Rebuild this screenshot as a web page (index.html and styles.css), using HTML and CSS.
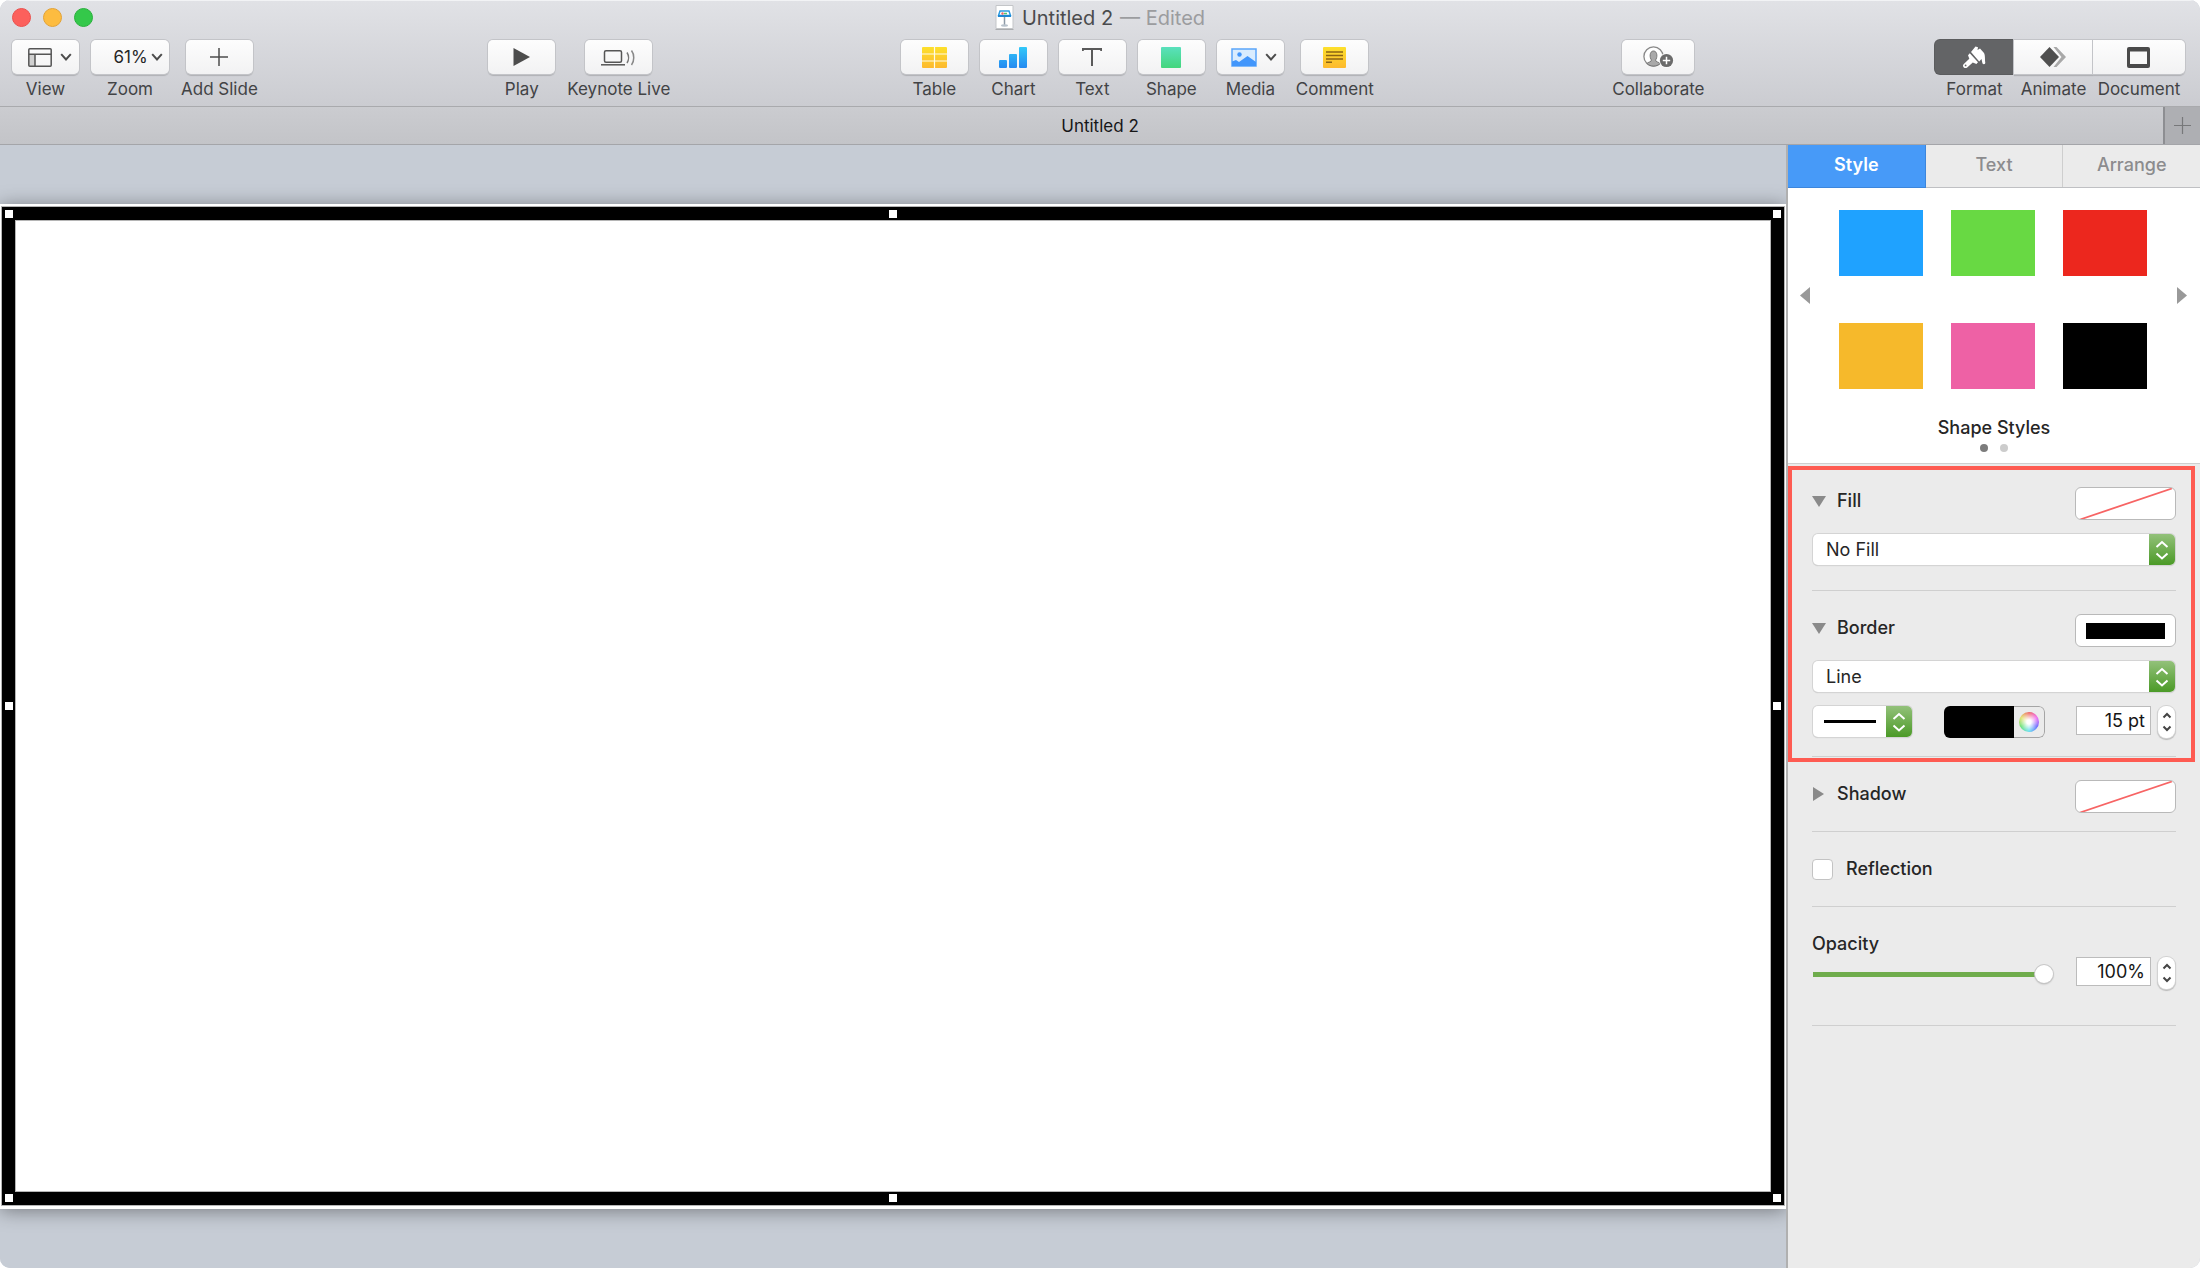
FILE: index.html
```html
<!DOCTYPE html>
<html lang="en">
<head>
<meta charset="utf-8">
<title>Untitled 2</title>
<link rel="stylesheet" href="styles.css">
</head>
<body>
<div class="window">
  <header class="chrome">
    <div class="titlebar">
      <div class="lights">
        <button class="light light-close" aria-label="Close"></button>
        <button class="light light-min" aria-label="Minimize"></button>
        <button class="light light-full" aria-label="Full screen"></button>
      </div>
      <h1 class="title">
        <svg class="doc-icon" width="19" height="25" viewBox="0 0 19 25"><path d="M1 .5h17v23H1z" fill="#fff" stroke="#c3c5c8"/><path d="M.5 24.5h18" stroke="#a9abae"/><path d="M5 6h9l1.500 4.500H3.500z" fill="#fff" stroke="#2e9be0" stroke-width="1.500"/><path d="M3 11h13" stroke="#1d87d4" stroke-width="2"/><circle cx="7.500" cy="8.500" r="1.200" fill="#e66"/><path d="M9 8.500h3" stroke="#5bc36a" stroke-width="1.500"/><path d="M9.500 12v8" stroke="#8c99a6" stroke-width="1.500"/><ellipse cx="9.500" cy="20.500" rx="3.500" ry="1.200" fill="#b8c2cc"/></svg>
        <span class="title-name">Untitled 2</span>
        <span class="title-state">— Edited</span>
      </h1>
    </div>
    <div class="toolbar">
      <div class="tool-group">
        <div class="tool">
          <button class="tool-btn tool-btn-menu" aria-labelledby="l-view">
            <svg width="24" height="19" viewBox="0 0 24 19" fill="none" stroke="#555" stroke-width="1.500"><path d="M1 6.500h6V18H1z" fill="#d0d0d0" stroke="none"/><rect x=".8" y=".8" width="22.400" height="17.400" rx="1"/><path d="M.8 6.200h22.400M7 6.200v12"/></svg>
            <svg class="chev" width="12" height="8" viewBox="0 0 12 8"><path d="M1.200 1.200 6 6.500l4.800-5.300"/></svg>
          </button>
          <span class="tool-label" id="l-view">View</span>
        </div>
        <div class="tool">
          <button class="tool-btn tool-btn-zoom" aria-describedby="l-zoom">61%<svg class="chev" width="12" height="8" viewBox="0 0 12 8"><path d="M1.200 1.200 6 6.500l4.800-5.300"/></svg></button>
          <span class="tool-label" id="l-zoom">Zoom</span>
        </div>
        <div class="tool">
          <button class="tool-btn" aria-labelledby="l-add"><svg width="18" height="18" viewBox="0 0 18 18" stroke="#4c4c4c" stroke-width="1.500"><path d="M9 0v18M0 9h18"/></svg></button>
          <span class="tool-label" id="l-add">Add Slide</span>
        </div>
      </div>
      <div class="tool-group">
        <div class="tool">
          <button class="tool-btn" aria-labelledby="l-play"><svg width="17" height="18" viewBox="0 0 17 18"><path d="M.5 0 17 9 .5 18z" fill="#4c4c4c"/></svg></button>
          <span class="tool-label" id="l-play">Play</span>
        </div>
        <div class="tool">
          <button class="tool-btn" aria-labelledby="l-live"><svg width="35" height="17" viewBox="0 0 35 17" fill="none" stroke="#555" stroke-width="1.500"><rect x="3.500" y="1.800" width="17" height="11.500" rx="1.500"/><path d="M0 15.800h24"/><path d="M26 3.500c2 3 2 7.500 0 10.500" stroke="#777"/><path d="M30.500 1.500c3 4 3 10.500 0 14.500" stroke="#888"/></svg></button>
          <span class="tool-label" id="l-live">Keynote Live</span>
        </div>
      </div>
      <div class="tool-group tool-group-insert">
        <div class="tool">
          <button class="tool-btn" aria-labelledby="l-table"><svg width="25" height="21" viewBox="0 0 25 21"><defs><linearGradient id="gy" x2="0" y2="1"><stop stop-color="#fde02c"/><stop offset="1" stop-color="#fdb92e"/></linearGradient></defs><rect width="25" height="21" rx="1" fill="url(#gy)"/><path d="M0 7h25M0 14h25M12.500 0v21" stroke="#fffbe8" stroke-width="1.200"/></svg></button>
          <span class="tool-label" id="l-table">Table</span>
        </div>
        <div class="tool">
          <button class="tool-btn" aria-labelledby="l-chart"><svg width="28" height="21" viewBox="0 0 28 21"><defs><linearGradient id="gb" gradientUnits="userSpaceOnUse" x1="0" y1="0" x2="0" y2="21"><stop stop-color="#33c9f9"/><stop offset="1" stop-color="#2489f0"/></linearGradient></defs><g fill="url(#gb)"><rect y="13" width="8" height="8" rx="1"/><rect x="10" y="7" width="8" height="14" rx="1"/><rect x="20" width="8" height="21" rx="1"/></g></svg></button>
          <span class="tool-label" id="l-chart">Chart</span>
        </div>
        <div class="tool">
          <button class="tool-btn" aria-labelledby="l-text"><svg width="20" height="20" viewBox="0 0 20 20" fill="none" stroke="#5a5a5a" stroke-width="2"><path d="M.8 4V2h18.400v2M10 2v17"/></svg></button>
          <span class="tool-label" id="l-text">Text</span>
        </div>
        <div class="tool">
          <button class="tool-btn" aria-labelledby="l-shape"><svg width="20" height="21" viewBox="0 0 20 21"><defs><linearGradient id="gg" x2="0" y2="1"><stop stop-color="#5ae0bd"/><stop offset="1" stop-color="#43d67c"/></linearGradient></defs><rect width="20" height="21" rx="1" fill="url(#gg)"/></svg></button>
          <span class="tool-label" id="l-shape">Shape</span>
        </div>
        <div class="tool">
          <button class="tool-btn tool-btn-menu" aria-labelledby="l-media"><svg width="26" height="19" viewBox="0 0 26 19"><rect x="1" y="1" width="24" height="17" fill="#d9ecfe" stroke="#5aa5fa" stroke-width="1.500"/><circle cx="8.500" cy="6.500" r="2.200" fill="#4296fb"/><path d="M1 13.500 5 12l3 2 8.500-6 8.500 6V18H1z" fill="#4296fb"/></svg>
            <svg class="chev" width="12" height="8" viewBox="0 0 12 8"><path d="M1.200 1.200 6 6.500l4.800-5.300"/></svg>
          </button>
          <span class="tool-label" id="l-media">Media</span>
        </div>
        <div class="tool">
          <button class="tool-btn" aria-labelledby="l-comment"><svg width="23" height="21" viewBox="0 0 23 21"><rect width="23" height="21" rx="1" fill="url(#gy)"/><path d="M3 5h17M3 8.500h17M3 12h17M3 15.200h6" stroke="#8a6414" stroke-width="1.400"/></svg></button>
          <span class="tool-label" id="l-comment">Comment</span>
        </div>
      </div>
      <div class="tool-group">
        <div class="tool">
          <button class="tool-btn tool-btn-wide" aria-labelledby="l-collab"><svg width="31" height="22" viewBox="0 0 31 22"><circle cx="10.500" cy="10.500" r="9.600" fill="#fff" stroke="#888" stroke-width="1.300"/><path d="M4 17.500c1-1.500 4.500-1.500 4.500-3.500C6.500 12 6.300 5 10.500 5s4 7 2 9c0 2 3.500 2 4.500 3.500-3 3.400-10 3.400-13 0z" fill="#a9a9a9" stroke="#777"/><circle cx="23.500" cy="14.500" r="7.500" fill="#fafafa"/><circle cx="23.500" cy="14.500" r="6.600" fill="#6b6b6b"/><path d="M23.500 10.800v7.400M19.800 14.500h7.400" stroke="#fff" stroke-width="1.500"/></svg></button>
          <span class="tool-label" id="l-collab">Collaborate</span>
        </div>
      </div>
      <div class="segments">
        <div class="tool">
          <button class="seg seg-on" aria-pressed="true" aria-labelledby="l-format"><svg width="23" height="22" viewBox="0 0 23 22" fill="#fff"><path d="M8 6 12.500.5 15 1.300 14.500 4 17 2.500 21 7c1.300 2 .8 7 1.300 9.500a1.500 1.500 0 0 1-3 .3L18.500 13l-2.300 2.500z"/><path d="M6.800 7.300 15 16.300l-1.600 1.700-3.600-1.600-5.600 5A2.300 2.300 0 0 1 .8 18L6.300 12.700 5 9.300z"/><circle cx="2.600" cy="19.400" r=".9" fill="#666"/></svg></button>
          <span class="tool-label" id="l-format">Format</span>
        </div>
        <div class="tool">
          <button class="seg" aria-labelledby="l-animate"><svg width="26" height="20" viewBox="0 0 26 20"><path d="M9.500 0 19 10 9.500 20 0 10z" fill="#4f4f4f"/><path d="M13.500 0h3L26 10l-9.500 10h-3L21.500 10z" fill="#a8a8a8"/></svg></button>
          <span class="tool-label" id="l-animate">Animate</span>
        </div>
        <div class="tool">
          <button class="seg seg-last" aria-labelledby="l-document"><svg width="23" height="21" viewBox="0 0 23 21"><rect width="23" height="21" rx="2" fill="#4a4a4a"/><rect x="3" y="4.500" width="17" height="12.500" fill="#f8f8f8"/></svg></button>
          <span class="tool-label" id="l-document">Document</span>
        </div>
      </div>
    </div>
  </header>
  <nav class="tabbar">
    <a class="doc-tab" href="#">Untitled 2</a>
    <button class="new-tab" aria-label="New tab"><svg width="17" height="17" viewBox="0 0 17 17" stroke="#77787a" stroke-width="1.200"><path d="M8.500 0v17M0 8.500h17"/></svg></button>
  </nav>
  <main class="workspace">
    <section class="canvas" aria-label="Slide canvas">
      <div class="slide">
        <div class="shape">
          <i class="handle nw"></i><i class="handle n"></i><i class="handle ne"></i>
          <i class="handle w"></i><i class="handle e"></i>
          <i class="handle sw"></i><i class="handle s"></i><i class="handle se"></i>
        </div>
      </div>
    </section>
    <aside class="inspector">
      <div class="tabs">
        <button class="tab tab-on">Style</button>
        <button class="tab">Text</button>
        <button class="tab">Arrange</button>
      </div>
      <div class="styles">
        <div class="styles-row">
          <button class="arrow" aria-label="Previous styles"><svg width="10" height="17" viewBox="0 0 10 17"><path d="M10 0v17L0 8.500z" fill="#999"/></svg></button>
          <div class="swatches">
            <button class="swatch blue" aria-label="Blue"></button>
            <button class="swatch green" aria-label="Green"></button>
            <button class="swatch red" aria-label="Red"></button>
            <button class="swatch yellow" aria-label="Yellow"></button>
            <button class="swatch pink" aria-label="Pink"></button>
            <button class="swatch black" aria-label="Black"></button>
          </div>
          <button class="arrow" aria-label="Next styles"><svg width="10" height="17" viewBox="0 0 10 17"><path d="M0 0v17l10-8.500z" fill="#999"/></svg></button>
        </div>
        <h2 class="styles-title">Shape Styles</h2>
        <div class="dots"><i class="dot dot-on"></i><i class="dot"></i></div>
      </div>
      <div class="panel">
        <div class="highlight"></div>
        <section class="section">
          <div class="head">
            <h3 class="head-title"><svg class="tri" width="14" height="14" viewBox="0 0 14 14"><path d="M0 2h14L7 13z"/></svg><label for="fill">Fill</label></h3>
            <button class="well" aria-label="Fill preview"><svg width="100" height="32" viewBox="0 0 100 32"><path d="M4 31.500 96 .5" stroke="#f76464" stroke-width="1.800"/></svg></button>
          </div>
          <div class="popup">
            <select class="select" id="fill"><option>No Fill</option></select>
            <span class="popup-cap"><svg width="14" height="20" viewBox="0 0 14 20"><path d="M1.500 7 7 2l5.500 5M1.500 13.500l5.500 5 5.500-5"/></svg></span>
          </div>
        </section>
        <section class="section section-border">
          <div class="head">
            <h3 class="head-title"><svg class="tri" width="14" height="14" viewBox="0 0 14 14"><path d="M0 2h14L7 13z"/></svg><label for="border">Border</label></h3>
            <button class="well" aria-label="Border preview"><span class="well-fill"></span></button>
          </div>
          <div class="popup">
            <select class="select" id="border"><option>Line</option></select>
            <span class="popup-cap"><svg width="14" height="20" viewBox="0 0 14 20"><path d="M1.500 7 7 2l5.500 5M1.500 13.500l5.500 5 5.500-5"/></svg></span>
          </div>
          <div class="controls">
            <button class="popup line-popup" aria-label="Line style"><span class="line-area"><span class="line-sample"></span></span><span class="popup-cap"><svg width="14" height="20" viewBox="0 0 14 20"><path d="M1.500 7 7 2l5.500 5M1.500 13.500l5.500 5 5.500-5"/></svg></span></button>
            <button class="color-well" aria-label="Line color"><span class="color-fill"></span><span class="wheel-box"><span class="wheel"></span></span></button>
            <div class="number">
              <input class="field" type="text" value="15 pt" aria-label="Line width">
              <button class="stepper" aria-label="Change line width"><svg width="10" height="20" viewBox="0 0 10 20"><path d="M1.500 5.500 5 2l3.500 3.500M1.500 14.500 5 18l3.500-3.500"/></svg></button>
            </div>
          </div>
        </section>
        <section class="section section-shadow">
          <div class="head">
            <h3 class="head-title"><svg class="tri" width="14" height="14" viewBox="0 0 14 14"><path d="M1 0v14l11-7z"/></svg>Shadow</h3>
            <button class="well" aria-label="Shadow preview"><svg width="100" height="32" viewBox="0 0 100 32"><path d="M4 31.500 96 .5" stroke="#f76464" stroke-width="1.800"/></svg></button>
          </div>
        </section>
        <section class="section section-reflection">
          <label class="check"><input class="checkbox" type="checkbox">Reflection</label>
        </section>
        <section class="section section-opacity">
          <label class="opacity-label" for="opacity">Opacity</label>
          <div class="opacity-row">
            <input class="slider" id="opacity" type="range" min="0" max="100" value="100">
            <div class="number">
              <input class="field" type="text" value="100%" aria-label="Opacity value">
              <button class="stepper" aria-label="Change opacity"><svg width="10" height="20" viewBox="0 0 10 20"><path d="M1.500 5.500 5 2l3.500 3.500M1.500 14.500 5 18l3.500-3.500"/></svg></button>
            </div>
          </div>
        </section>
      </div>
    </aside>
  </main>
</div>
</body>
</html>
```
FILE: styles.css
```css
* { box-sizing: border-box; }
body { margin: 0; background: #fff; color: #262626; font: 18px/22px Inter, "Liberation Sans", sans-serif; }
button, input, select { margin: 0; padding: 0; border: 0; background: none; color: inherit; font: inherit; }
svg { display: block; flex: none; }
h1, h2, h3 { margin: 0; font: inherit; }

.window { display: flex; flex-direction: column; min-height: 100vh; border-radius: 10px; overflow: hidden; background: #c6ccd5; }

.chrome { background: linear-gradient(#e1e2e6, #cbccd1); border-bottom: 1px solid #a9aaad; box-shadow: inset 0 1px #f2f3f5; }
.titlebar { display: grid; grid-template-columns: 1fr auto 1fr; align-items: center; height: 34px; padding: 0 12px; }
.lights { display: flex; gap: 12px; }
.light { width: 19px; height: 19px; border-radius: 50%; }
.light-close { background: #fc605c; border: 1px solid #ea504d; }
.light-min { background: #fdbc40; border: 1px solid #e2a236; }
.light-full { background: #34c84a; border: 1px solid #29b03c; }
.title { display: flex; align-items: center; padding-top: 1px; color: #4a4b4d; font-size: 20px; }
.doc-icon { margin-right: 8px; }
.title-state { margin-left: 7px; color: #9b9c9f; }

.toolbar { display: flex; justify-content: space-between; padding: 6px 15px 6px 12px; }
.tool-group { display: flex; gap: 12px; }
.tool-group-insert { margin-right: 8px; }
.tool { display: flex; flex-direction: column; align-items: center; }
.tool-btn, .seg { display: flex; align-items: center; justify-content: center; gap: 8px; height: 34px; background: linear-gradient(#fdfdfd, #f2f2f3); box-shadow: 0 0 0 1px #c3c4c8, 0 2px 1px #b0b1b5; }
.tool-btn { width: 67px; border-radius: 5px; }
.tool-btn-menu { padding-left: 8px; }
.tool-btn-zoom { width: 78px; padding-left: 16px; gap: 3px; font-size: 17px; }
.tool-btn-wide { width: 72px; }
.chev path { fill: none; stroke: #4c4c4c; stroke-width: 2; }
.tool-label { padding-top: 4px; color: #424345; font-size: 17px; line-height: 22px; white-space: nowrap; }
.segments { display: flex; }
.seg { width: 79px; border-right: 1px solid #d0d1d4; }
.seg-on { border: 0; border-radius: 5px 0 0 5px; background: #636466; box-shadow: 0 0 0 1px #5b5c5e; }
.seg-last { width: 92px; border: 0; border-radius: 0 5px 5px 0; }

.tabbar { display: flex; height: 38px; background: linear-gradient(#cbccd0, #c3c4c8); border-bottom: 1px solid #a4a5a9; }
.doc-tab { flex: 1; padding: 8px 0 0 37px; color: #161617; font-size: 17px; text-align: center; text-decoration: none; }
.new-tab { display: grid; place-items: center; width: 37px; background: #aeafb3; border-left: 2px solid #8d8e92; }

.workspace { display: flex; flex: 1; }
.canvas { display: flex; flex: 1; align-items: center; overflow: hidden; background: #c6ccd5; }
.slide { flex: 1; aspect-ratio: 16 / 9; padding: 3px 2px 4px; background: #fff; box-shadow: 0 2px 18px #00000066; }
.shape { position: relative; height: 100%; border: 13px solid #000; box-shadow: 0 0 0 1px #b5b5b5, inset 0 0 0 1px #b5b5b5; }
.handle { position: absolute; width: 8px; height: 8px; margin: -4px; background: #fff; }
.nw, .n, .ne { top: -6px; }
.sw, .s, .se { bottom: -6px; }
.w, .e { top: 50%; }
.nw, .w, .sw { left: -6px; }
.ne, .e, .se { right: -6px; }
.n, .s { left: 50%; }

.inspector { width: 414px; background: #ebebeb; border-left: 2px solid #b0b0b0; }
.tabs { display: flex; height: 43px; border-bottom: 1px solid #bfc0c3; }
.tab { flex: 1; padding-bottom: 2px; border-left: 1px solid #cecece; color: #8c8c8e; font-weight: 500; }
.tab-on { margin-bottom: -1px; padding-bottom: 3px; background: #479af8; border: 1px solid #3c86dc; border-width: 0 1px 1px 0; color: #fff; font-weight: 600; }
.tab-on + .tab { border-left: 0; }

.styles { height: 276px; padding-top: 22px; background: #fff; border-bottom: 1px solid #cfcfcf; }
.styles-row { display: flex; align-items: center; justify-content: space-between; padding: 0 13px 0 12px; }
.arrow { padding-bottom: 8px; }
.swatches { display: grid; grid-template-columns: repeat(3, 84px); gap: 47px 28px; margin-right: 2px; }
.swatch { height: 66px; }
.blue { background: #1fa2ff; }
.green { background: #68d943; }
.red { background: #ec271e; }
.yellow { background: #f6b92b; }
.pink { background: #ee61a5; }
.black { background: #000; }
.styles-title { padding-top: 28px; font-weight: 500; text-align: center; }
.dots { display: flex; justify-content: center; gap: 12px; padding-top: 5px; }
.dot { width: 8px; height: 8px; border-radius: 50%; background: #ccc; }
.dot-on { background: #7c7c7c; }

.panel { position: relative; padding: 0 24px; }
.highlight { position: absolute; inset: 2px 5px auto 0; height: 296px; border: 4px solid #fe5b52; pointer-events: none; }
.section { padding: 23px 0 25px; border-bottom: 1px solid #cfcfcf; }
.section-border { padding-bottom: 18px; }
.section-shadow { padding-bottom: 18px; }
.head { display: flex; justify-content: space-between; height: 33px; }
.head-title { display: flex; align-items: center; gap: 11px; height: 28px; font-weight: 500; }
.tri { fill: #8a8a8a; }
.well { display: grid; place-items: center; width: 101px; height: 33px; background: #fff; border: 1px solid #b9b9b9; border-radius: 6px; overflow: hidden; }
.well-fill { width: 79px; height: 16px; background: #000; }
.popup { display: flex; height: 31px; margin: 14px 1px 0; border-radius: 5px; overflow: hidden; background: #fff; box-shadow: 0 0 0 1px #d4d4d4, 0 1px 1px #bdbdbd; }
.select { flex: 1; padding-left: 13px; appearance: none; font-size: 18px; }
.popup-cap { display: grid; place-items: center; width: 26px; background: linear-gradient(#93c17a, #4b9a27); }
.popup-cap path { fill: none; stroke: #fff; stroke-width: 2; }
.controls { display: flex; justify-content: space-between; align-items: flex-start; margin-top: 14px; }
.line-popup { width: 99px; margin: 0 0 0 1px; }
.line-area { display: grid; flex: 1; place-items: center; height: 100%; }
.line-popup .popup-cap { height: 100%; }
.line-sample { width: 52px; height: 3px; background: #000; }
.color-well { display: flex; width: 101px; height: 32px; border-radius: 6px; overflow: hidden; }
.color-fill { flex: 1; height: 100%; background: #000; }
.wheel-box { display: grid; place-items: center; width: 31px; height: 100%; border: 1px solid #a5a5a5; border-left: 0; border-radius: 0 6px 6px 0; }
.wheel { width: 20px; height: 20px; border-radius: 50%; background: radial-gradient(#fff 15%, #fff0 75%), conic-gradient(#e55, #e5e, #55f, #5de, #5d6, #dd5, #e55); }
.number { display: flex; gap: 7px; padding-right: 1px; }
.field { width: 75px; height: 29px; padding-right: 5px; background: #fff; border: 1px solid #bcbcbc; color: #161616; text-align: right; }
.stepper { display: grid; place-items: center; width: 17px; height: 32px; border-radius: 8px; background: #fff; box-shadow: 0 0 0 1px #d2d2d2, 0 1px 1px 1px #bbb; }
.stepper path { fill: none; stroke: #444; stroke-width: 2; }
.section-reflection { padding: 25px 0; }
.check { display: flex; align-items: center; gap: 13px; height: 24px; font-weight: 500; }
.checkbox { width: 21px; height: 21px; appearance: none; background: #fff; border: 1px solid #c3c3c3; border-radius: 4px; }
.section-opacity { padding: 25px 0 34px; }
.opacity-label { display: block; height: 25px; line-height: 24px; font-weight: 500; }
.opacity-row { display: flex; justify-content: space-between; }
.slider { width: 241px; height: 34px; appearance: none; background: linear-gradient(#6fac4c, #6fac4c) 1px 50% / 228px 5px no-repeat; }
.slider::-webkit-slider-thumb { appearance: none; width: 18px; height: 18px; border-radius: 50%; background: #fff; box-shadow: 0 0 0 1px #c8c8c8, 0 1px 2px #999; }
```
